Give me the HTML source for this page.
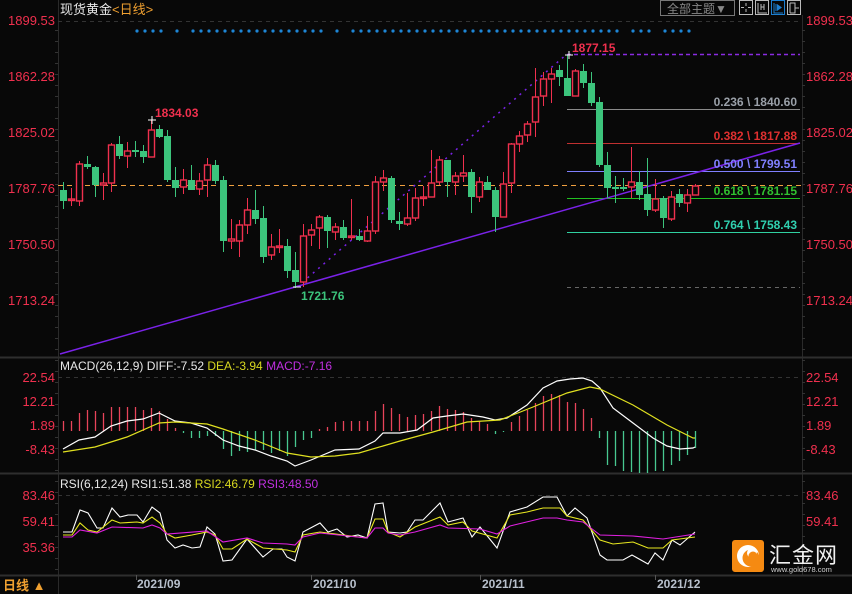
<!DOCTYPE html>
<html><head><meta charset="utf-8"><style>
html,body{margin:0;padding:0;background:#080808;width:852px;height:594px;overflow:hidden}
svg{display:block}
text{font-family:"Liberation Sans","Noto Sans CJK SC",sans-serif}
</style></head><body>
<svg id="s" width="852" height="594" xmlns="http://www.w3.org/2000/svg">
<rect width="852" height="594" fill="#080808"/>
<line x1="58.5" y1="0" x2="58.5" y2="594" stroke="#2a2a2a"/>
<line x1="802.5" y1="15" x2="802.5" y2="575" stroke="#2a2a2a"/>
<line x1="0" y1="357.5" x2="852" y2="357.5" stroke="#2e2e2e" stroke-width="2"/>
<line x1="0" y1="473.5" x2="852" y2="473.5" stroke="#2e2e2e" stroke-width="2"/>
<line x1="0" y1="575.5" x2="852" y2="575.5" stroke="#2e2e2e" stroke-width="2"/>
<line x1="58" y1="21.5" x2="802" y2="21.5" stroke="#333" stroke-dasharray="4,4"/>
<line x1="58" y1="377.5" x2="802" y2="377.5" stroke="#333" stroke-dasharray="4,4"/>
<line x1="58" y1="495.5" x2="802" y2="495.5" stroke="#333" stroke-dasharray="4,4"/>
<line x1="136.5" y1="575" x2="136.5" y2="580" stroke="#555"/>
<line x1="311.5" y1="575" x2="311.5" y2="580" stroke="#555"/>
<line x1="480.5" y1="575" x2="480.5" y2="580" stroke="#555"/>
<line x1="655.5" y1="575" x2="655.5" y2="580" stroke="#555"/>
<g id="ticks"></g>

<text x="60" y="14" font-size="13" fill="#e8e8e8">现货黄金<tspan fill="#f0a030">&lt;日线&gt;</tspan></text>
<rect x="660.5" y="0.5" width="74" height="15" fill="none" stroke="#777"/>
<text x="667" y="13" font-size="12" fill="#888">全部主题▼</text>
<g fill="none" stroke="#bbb">
<rect x="739.5" y="0.5" width="13" height="14"/><rect x="755.5" y="0.5" width="13" height="14"/>
<rect x="771.5" y="0.5" width="13" height="14" stroke="#1d7fd0"/><rect x="787.5" y="0.5" width="13" height="14"/>
<path d="M746 3v3M746 9v3M741 7.5h3M748 7.5h3"/>
<path d="M758 3v10h9M761 4v6M764 4v6M761 7h3"/>
<path d="M774 3v10h9M776 4v7" stroke="#1d7fd0"/>
<path d="M790 3v10M790 3h5v10h-5M795 8h4" />
</g>
<path d="M777 4l5 3.5-5 3.5z" fill="#1d7fd0"/>

<g font-size="13" fill="#f0304e">
<g text-anchor="end">
<text x="55" y="25">1899.53</text><text x="55" y="81">1862.28</text><text x="55" y="137">1825.02</text>
<text x="55" y="193">1787.76</text><text x="55" y="249">1750.50</text><text x="55" y="305">1713.24</text>
<text x="55" y="382">22.54</text><text x="55" y="406">12.21</text><text x="55" y="430">1.89</text><text x="55" y="454">-8.43</text>
<text x="55" y="500">83.46</text><text x="55" y="526">59.41</text><text x="55" y="552">35.36</text>
</g>
<text x="806" y="25">1899.53</text><text x="806" y="81">1862.28</text><text x="806" y="137">1825.02</text>
<text x="806" y="193">1787.76</text><text x="806" y="249">1750.50</text><text x="806" y="305">1713.24</text>
<text x="806" y="382">22.54</text><text x="806" y="406">12.21</text><text x="806" y="430">1.89</text><text x="806" y="454">-8.43</text>
<text x="806" y="500">83.46</text><text x="806" y="526">59.41</text>
</g>

<g id="dots" fill="#1e86d6"></g>

<line x1="567" y1="54.5" x2="800" y2="54.5" stroke="#8a2be2" stroke-dasharray="4,3" stroke-width="1.5"/>
<line x1="567" y1="109.5" x2="800" y2="109.5" stroke="#8a8a8a"/>
<line x1="567" y1="143.5" x2="800" y2="143.5" stroke="#c03030"/>
<line x1="567" y1="171.5" x2="800" y2="171.5" stroke="#8080ff"/>
<line x1="567" y1="198.5" x2="800" y2="198.5" stroke="#22c022"/>
<line x1="567" y1="232.5" x2="800" y2="232.5" stroke="#30d0a0"/>
<line x1="567" y1="287.5" x2="800" y2="287.5" stroke="#666" stroke-dasharray="4,4"/>
<line x1="58" y1="185.5" x2="802" y2="185.5" stroke="#f0a040" stroke-dasharray="5,4"/>
<line x1="60" y1="354" x2="800" y2="143" stroke="#7a22e8" stroke-width="1.5"/>
<line x1="297" y1="287" x2="567" y2="54" stroke="#7a22e8" stroke-dasharray="2,5" stroke-width="1.5"/>

<g id="candles"></g>

<g font-size="12" font-weight="bold">
<text x="155" y="117" fill="#f0304e">1834.03</text>
<text x="301" y="300" fill="#3cc47c">1721.76</text>
<text x="572" y="52" fill="#f0304e">1877.15</text>
<text x="797" y="106" fill="#9aa0a8" text-anchor="end">0.236 \ 1840.60</text>
<text x="797" y="140" fill="#e03030" text-anchor="end">0.382 \ 1817.88</text>
<text x="797" y="168" fill="#8080ff" text-anchor="end">0.500 \ 1799.51</text>
<text x="797" y="195" fill="#30c030" text-anchor="end">0.618 \ 1781.15</text>
<text x="797" y="229" fill="#30d0b0" text-anchor="end">0.764 \ 1758.43</text>
</g>
<path d="M148 120h8M152 116v8" stroke="#fff"/>
<path d="M293 287h8" stroke="#fff"/>
<path d="M565 55h8M569 51v8" stroke="#fff"/>

<text x="60" y="370" font-size="12" fill="#e8e8e8">MACD(26,12,9) DIFF:-7.52 <tspan fill="#d8d820">DEA:-3.94</tspan> <tspan fill="#c030e0">MACD:-7.16</tspan></text>
<g id="hist"></g>
<polyline fill="none" stroke="#ffffff" stroke-width="1.2" points="63,449 79,440 95,437 111,426 127,421 143,419 159,413 175,421 191,423 207,428 223,440 239,446 255,450 271,456 287,461 295,466 311,460 335,450 359,449 375,441 383,433 400,433 417,430 433,418 447,416 463,414 483,417 495,420 507,418 527,405 543,388 557,381 570,379 583,378 592,381 600,388 613,408 633,423 653,438 667,446 680,449 693,448 695,447"/>
<polyline fill="none" stroke="#e0e020" stroke-width="1.2" points="63,452 95,447 127,437 159,423 175,422 207,424 223,429 255,440 287,453 311,457 335,456 359,453 383,446 400,441 433,432 467,422 500,420 533,407 567,393 590,387 600,389 633,405 667,425 693,438 695,438"/>

<text x="60" y="488" font-size="12" fill="#e8e8e8">RSI(6,12,24) RSI1:51.38 <tspan fill="#d8d820">RSI2:46.79</tspan> <tspan fill="#c030e0">RSI3:48.50</tspan></text>
<polyline fill="none" stroke="#ffffff" stroke-width="1.1" points="63,532 72,532 80,510 88,513 97,528 103,528 112,508 120,517 128,515 137,515 143,522 152,507 160,513 167,540 175,548 183,545 192,548 200,547 207,527 215,534 223,561 232,560 247,539 263,557 273,549 282,549 287,557 295,561 303,532 320,523 328,532 337,529 347,537 358,535 367,538 375,504 383,503 388,532 400,533 407,532 415,520 423,520 440,503 448,522 463,518 472,537 480,527 497,548 510,512 527,507 543,497 557,497 567,516 575,508 587,518 600,555 607,560 623,560 632,555 648,564 655,553 663,560 672,540 680,545 695,532"/>
<polyline fill="none" stroke="#e8e820" stroke-width="1.1" points="63,535 72,535 80,523 88,530 97,532 112,520 120,523 137,522 143,523 152,517 160,523 167,534 175,538 192,535 207,532 215,535 223,549 232,549 247,539 263,548 287,550 295,552 303,535 320,532 367,538 375,519 383,519 388,532 400,537 415,527 440,517 448,525 463,522 472,531 497,538 510,515 527,512 543,508 560,508 567,516 583,520 600,540 613,544 633,542 648,548 663,548 672,540 695,537"/>
<polyline fill="none" stroke="#e020e0" stroke-width="1.1" points="63,537 72,537 80,530 97,533 112,527 143,528 152,525 160,528 167,534 207,531 223,542 247,538 263,543 287,544 295,545 303,537 320,533 367,538 375,528 383,528 388,533 400,535 415,532 440,525 448,528 480,529 497,534 510,526 543,518 557,518 567,520 583,522 600,535 633,536 663,539 695,534"/>

<text x="3" y="590" font-size="13" fill="#f0a030" font-weight="bold">日线 ▲</text>
<g font-size="12" font-weight="bold" fill="#b8c0cc">
<text x="137" y="588">2021/09</text><text x="313" y="588">2021/10</text><text x="482" y="588">2021/11</text><text x="657" y="588">2021/12</text>
</g>

<rect x="732" y="540" width="32" height="32" rx="3" fill="#f58a12"/>
<circle cx="748" cy="556" r="11" fill="#fff"/>
<circle cx="751" cy="558" r="8.5" fill="#f58a12"/>
<circle cx="752" cy="553" r="5" fill="#fff"/>
<circle cx="753" cy="556" r="4.5" fill="#f58a12"/>
<text x="769" y="563" font-size="22" fill="#f0f0f0" letter-spacing="1">汇金网</text>
<text x="771" y="572" font-size="7.5" fill="#cfcfcf">www.gold678.com</text>
</svg>
<script>
var NS="http://www.w3.org/2000/svg";
function el(p,t,a){var e=document.createElementNS(NS,t);for(var k in a)e.setAttribute(k,a[k]);p.appendChild(e);return e;}
var R="#f0304e",G="#3cc47c";
var C=[["g",190,201,182,209],["r",199,200,188,206],["r",164,201,161,206],["g",164,167,156,169],["g",167,185,166,197],["r",183,185,173,200],["r",145,183,143,192],["g",144,156,136,159],["r",151,156,142,168],["g",150,152,141,157],["g",151,157,145,163],["r",130,157,120,157],["g",129,137,125,138],["g",136,180,130,182],["g",180,188,167,197],["r",180,187,169,194],["g",180,190,165,190],["r",181,189,173,195],["r",165,180,158,197],["g",165,181,160,184],["g",180,241,176,252],["r",239,241,219,249],["r",225,241,220,257],["r",210,225,198,234],["g",210,219,190,224],["g",218,257,206,263],["r",247,255,234,260],["r",246,247,229,253],["g",246,271,239,278],["g",270,282,252,288],["r",236,282,224,287],["r",230,235,224,246],["r",217,228,215,249],["g",217,231,215,248],["r",227,232,223,240],["g",227,238,220,240],["r",236,237,199,240],["g",236,240,229,241],["r",231,241,216,242],["r",182,231,176,234],["r",178,182,170,191],["g",178,220,176,223],["g",221,224,212,230],["r",218,224,193,226],["r",198,218,188,221],["r",197,198,186,206],["r",183,197,150,197],["r",160,182,156,185],["g",160,182,160,197],["r",176,182,172,195],["r",173,176,155,182],["g",172,197,169,213],["r",182,197,177,202],["g",182,190,176,190],["g",190,217,187,232],["r",184,217,172,217],["r",144,183,143,193],["r",136,144,131,152],["r",124,135,121,142],["r",97,122,68,137],["r",79,96,72,106],["r",74,79,68,103],["g",70,77,65,86],["g",78,96,55,96],["r",71,96,69,96],["g",71,83,64,88],["g",83,103,72,106],["g",102,165,97,167],["g",165,188,152,198],["g",187,189,176,203],["g",187,189,178,191],["r",182,187,147,198],["g",182,195,171,200],["g",194,210,158,216],["r",199,210,179,212],["g",198,218,196,228],["r",197,219,191,221],["g",194,203,189,207],["r",195,203,189,212],["r",186,195,184,195]];
var cg=document.getElementById("candles");
C.forEach(function(c,i){var x=63+8*i,col=c[0]=="r"?R:G;var t=c[1],b=c[2];if(b-t<1.5)b=t+1.5;
el(cg,"line",{x1:x+.5,y1:c[3],x2:x+.5,y2:t,stroke:col});el(cg,"line",{x1:x+.5,y1:b,x2:x+.5,y2:c[4],stroke:col});
if(c[0]=="r")el(cg,"rect",{x:x-2.5,y:t,width:6,height:b-t,fill:"#080808",stroke:col,"stroke-width":1.4});
else el(cg,"rect",{x:x-3,y:t,width:7,height:b-t,fill:col});});
var H=[10,10,18,21,20,18,24,24,24,24,21,23,20,12,3,-2,-7,-7,-5,-5,-18,-25,-20,-21,-19,-19,-22,-20,-25,-16,-9,-7,2,4,9,10,10,10,10,20,27,23,17,14,16,17,20,25,22,21,19,13,10,7,-3,-1,9,15,21,28,35,37,36,29,28,22,13,-7,-34,-35,-40,-41,-42,-42,-40,-40,-34,-30,-24,-17];
var hg=document.getElementById("hist");
H.forEach(function(h,i){var x=63.5+8*i;el(hg,"line",{x1:x,y1:431,x2:x,y2:431-h,stroke:h>0?"#e8445a":"#48c890","stroke-width":1.3});});
var dg=document.getElementById("dots");
for(var x=137;x<=690;x+=8){if((x>162&&x<175)||(x>178&&x<190)||(x>322&&x<330)||(x>338&&x<346)||(x>620&&x<630)||(x>654&&x<662))continue;el(dg,"circle",{cx:x,cy:31,r:1.6});}
var tg=document.getElementById("ticks");
for(var y=30;y<575;y+=11){el(tg,"line",{x1:55,y1:y+.5,x2:58,y2:y+.5,stroke:"#333"});el(tg,"line",{x1:802,y1:y+.5,x2:805,y2:y+.5,stroke:"#333"});}
</script>
</body></html>
